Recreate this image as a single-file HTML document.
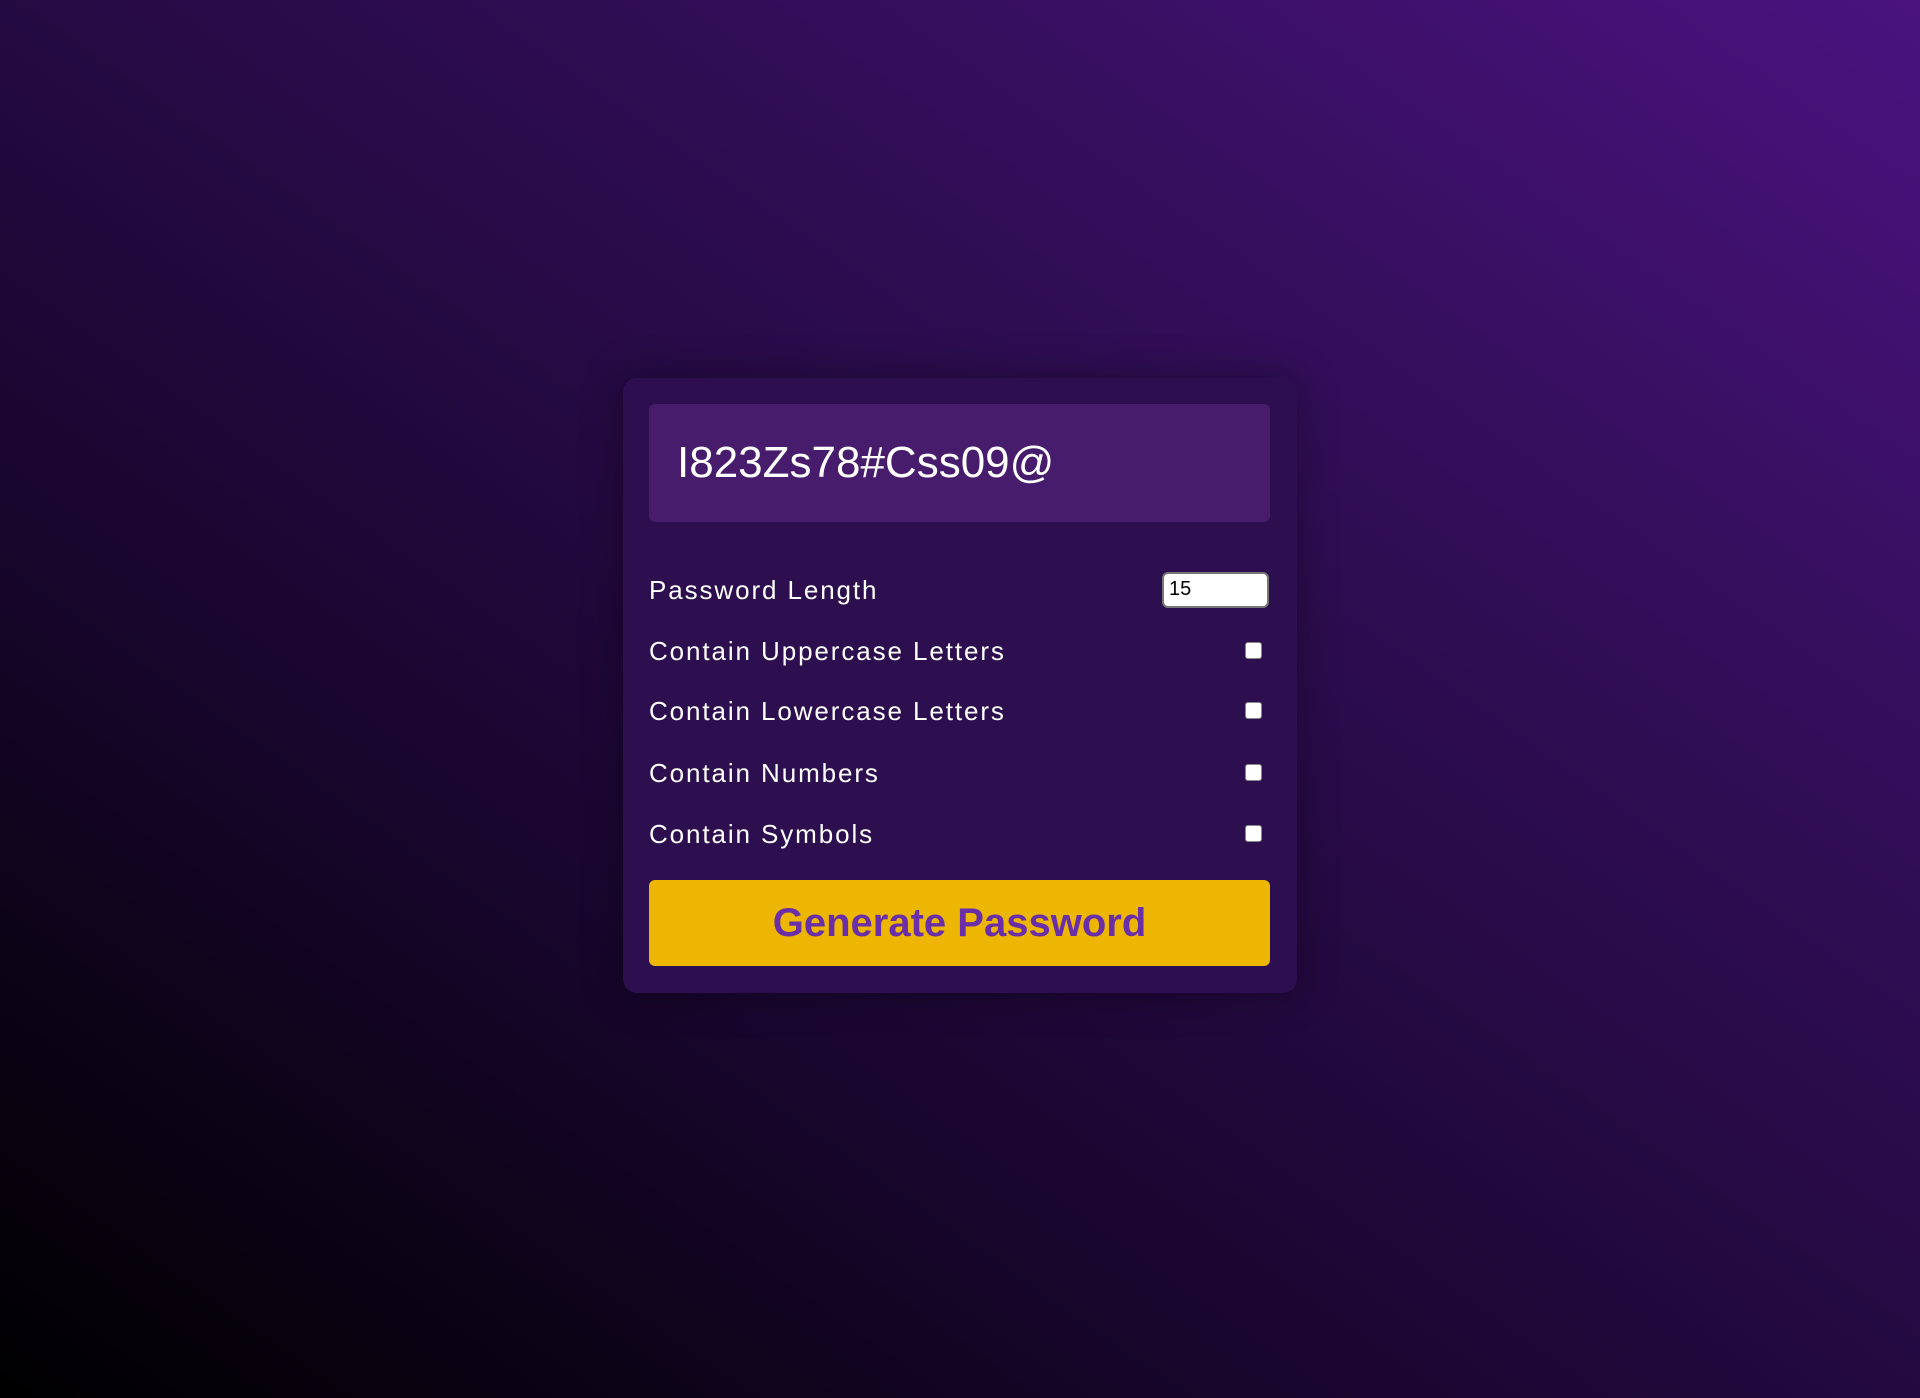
<!DOCTYPE html>
<html><head><style>
html,body{margin:0;width:1920px;height:1398px;overflow:hidden}
body{background:linear-gradient(35deg,#000 0%,#1a0630 35%,#2e0d52 65%,#4a137f 100%);font-family:"Liberation Sans",sans-serif;position:relative}
.card{position:absolute;left:623px;top:378px;width:674px;height:615px;background:#2d0f4f;border-radius:14px;box-shadow:0 0 40px rgba(0,0,0,.35)}
.out{position:absolute;left:26px;top:26px;width:621px;height:118px;background:#471c6c;border-radius:6px;color:#fff;font-size:44px;line-height:118px;padding-left:28px;box-sizing:border-box}
.row{position:absolute;left:26px;width:621px;color:#fff;font-size:26px;letter-spacing:1.9px;height:40px;line-height:40px}
.cb{position:absolute;right:8px;top:11px;width:17px;height:17px;background:#fff;border-radius:3px;border:1px solid #888;box-sizing:border-box}
.inp{position:absolute;right:1px;top:2px;width:107px;height:36px;background:#fff;border:2px solid #777;border-radius:6px;box-sizing:border-box;color:#000;font-size:20px;letter-spacing:0;line-height:30px;padding-left:5px}
.btn{position:absolute;left:26px;top:502px;width:621px;height:86px;background:#ecb602;border-radius:6px;color:#6a2ea8;font-weight:bold;font-size:40px;text-align:center;line-height:86px}
</style></head><body>
<div class="card">
<div class="out">I823Zs78#Css09@</div>
<div class="row" style="top:192px">Password Length<div class="inp">15</div></div>
<div class="row" style="top:253px">Contain Uppercase Letters<div class="cb"></div></div>
<div class="row" style="top:313px">Contain Lowercase Letters<div class="cb"></div></div>
<div class="row" style="top:375px">Contain Numbers<div class="cb"></div></div>
<div class="row" style="top:436px">Contain Symbols<div class="cb"></div></div>
<div class="btn">Generate Password</div>
</div>
</body></html>
